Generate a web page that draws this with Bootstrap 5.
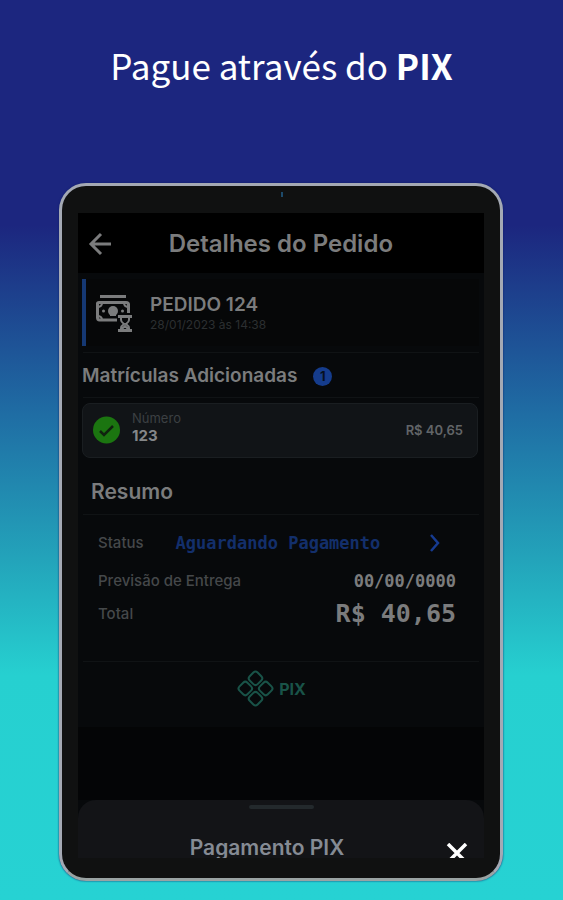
<!DOCTYPE html>
<html lang="pt-BR">
<head>
<meta charset="utf-8">
<meta name="viewport" content="width=device-width, initial-scale=1">
<title>Detalhes do Pedido</title>
<link href="https://cdn.jsdelivr.net/npm/bootstrap@5.3.0/dist/css/bootstrap.min.css" rel="stylesheet">
<style>
body{min-height:100vh;background:linear-gradient(180deg,#1c267f 0%,#1c267f 25%,#1f6da4 46%,#23a3ba 62%,#26d0d0 75%,#26d2d3 100%);font-family:Inter,"Noto Sans",sans-serif;line-height:20px;color:#7b7c7d}
.promo{font-family:"Noto Sans CJK SC","Noto Sans",sans-serif;font-size:35px;line-height:48px;font-weight:400;padding:41px 0 94px}
.tablet{margin:0 60px 19px 59px;border:3px solid #a4a9b4;border-bottom-color:#9aa3a3;border-radius:27px;background:#101111;padding:27px 16px 20px;box-shadow:0 0 2px #0e1d67;position:relative}
.lens{position:absolute;top:6px;left:50%;width:2px;height:5px;background:#1d4a6a}
.screen{background:#07090b;overflow:hidden}
.app-top{background:#000;height:60px;padding:2px 91px 0 10px}
.app-top h1{font-size:24px;line-height:30px;font-weight:600}
.icon-btn{border:0;background:none;padding:0;line-height:0;color:inherit}
.order{margin:6px 5px 6px 4px;height:67px;border-left:4px solid #153873;background:#060708;padding-left:9px;gap:18px}
.order h2{font-size:19px;line-height:24px;font-weight:600}
.order time{font-size:12px;line-height:16px;color:#2c2f31}
.rule{border-top:1px solid #101315;margin:0 5px}
.sec-title{font-size:19px;line-height:24px;font-weight:600}
.added{padding:11px 4px 9px;gap:16px}
.count{width:19px;height:19px;line-height:19px;border-radius:50%;background:#153c8c;color:#07101f;font-size:13px;font-weight:700;text-align:center}
.entry{margin:5px 6px 0 4px;padding:6px 14px 12px 10px;border:1px solid #1a1e21;border-radius:8px;background:#111417;gap:12px}
.tiny{font-size:13px;line-height:17px;color:#3c4043}
.entry strong{font-size:15px;line-height:18px;font-weight:700;color:#858789}
.entry .price{font-size:13px;font-weight:600;color:#626568}
.resumo{font-size:21px;line-height:24px;font-weight:600;padding:22px 13px 10px}
.facts{padding:14px 28px 0 20px;font-size:15px;color:#45484a}
.facts dt{font-weight:500}
.mono{font-family:"DejaVu Sans Mono","Liberation Mono",monospace;font-weight:700;color:#7b7c7d}
.status-link{color:#132f6b;font-size:17px}
.eta{padding:10px 0 8px}
.date{font-size:17px}
.total{font-size:25px;line-height:30px}
.pix{color:#195348;font-size:16px;font-weight:700;padding:8px 19px 20px 0;gap:5px}
.under{background:#040506;height:73px}
.sheet{background:#131417;border-radius:18px 18px 0 0;height:58px;overflow:hidden;color:#858b94}
.grab{width:65px;height:4px;border-radius:2px;background:#23292c;margin:5px auto 0}
.sheet h2{font-size:21px;line-height:24px;font-weight:600;padding-left:58px}
.sheet-head{padding:27px 16px 0 0}
.close-pix{color:#fff;margin-top:7px}
</style>
</head>
<body>
<header class="promo text-center text-white">Pague através do <b>PIX</b></header>
<main class="tablet">
<span class="lens"></span>
<div class="screen">
  <div class="app-top d-flex align-items-center justify-content-between">
    <button class="icon-btn" type="button" aria-label="Voltar"><svg width="24" height="24" viewBox="0 0 24 24" fill="none" stroke="currentColor" stroke-width="3"><path d="M23 12H3M13 2 3 12l10 10"/></svg></button>
    <h1 class="m-0 text-nowrap">Detalhes do Pedido</h1>
  </div>
  <section class="order d-flex align-items-center">
    <svg width="37" height="38" viewBox="0 0 37 38" fill="none" stroke="currentColor" stroke-width="3"><path d="M5 2.500H31"/><path d="M22 26H4.500Q2.500 26 2.500 23.500V9.500Q2.500 8.500 4 8.500H31Q33.500 8.500 33.500 10.500V19"/><path d="M7 9Q7 13 2 13M29 9Q29 13 34 13M2 22Q7 22 7 26" stroke-width="2"/><circle cx="18" cy="17" r="5" fill="currentColor" stroke="none"/><path d="M15 17h6v5h-6z" fill="currentColor" stroke="none"/><circle cx="8.500" cy="17" r="1.500" fill="currentColor" stroke="none"/><circle cx="27.500" cy="17" r="1.500" fill="currentColor" stroke="none"/><path d="M23 22.500H37M23 36.500H37" stroke-width="3"/><path d="M26 24v2q0 2 3 4-3 2-3 4v2M34 24v2q0 2-3 4 3 2 3 4v2M27 35l3-3 3 3" stroke-width="2"/></svg>
    <div><h2 class="m-0">PEDIDO 124</h2><time class="d-block" datetime="2023-01-28T14:38">28/01/2023 às 14:38</time></div>
  </section>
  <div class="rule"></div>
  <div class="added d-flex align-items-center"><h2 class="sec-title m-0">Matrículas Adicionadas</h2><span class="count">1</span></div>
  <div class="rule"></div>
  <section class="entry d-flex align-items-center">
    <svg class="mt-1" width="27" height="28" viewBox="0 0 27 28"><circle cx="13.500" cy="14" r="13.500" fill="#1b7510"/><path d="m7 15 4 4 9-9" fill="none" stroke="#10230f" stroke-width="2.500"/></svg>
    <div class="flex-grow-1"><div class="tiny">Número</div><strong class="d-block">123</strong></div>
    <span class="price mt-1">R$ 40,65</span>
  </section>
  <h2 class="resumo m-0">Resumo</h2>
  <div class="rule"></div>
  <dl class="facts m-0">
    <div class="d-flex align-items-center pt-1 pb-2"><dt>Status</dt><dd class="m-0 flex-grow-1 ms-4"><a href="#status" class="status-link mono text-decoration-none d-flex align-items-center justify-content-between ps-2 pe-3 text-nowrap">Aguardando Pagamento<svg width="10" height="18" viewBox="0 0 10 18" fill="none" stroke="#163b91" stroke-width="2.500"><path d="m1 1 7 8-7 8"/></svg></a></dd></div>
    <div class="eta d-flex align-items-center justify-content-between"><dt>Previsão de Entrega</dt><dd class="m-0 mono date">00/00/0000</dd></div>
    <div class="d-flex align-items-center justify-content-between pb-4 mb-2"><dt>Total</dt><dd class="m-0 mono total">R$ 40,65</dd></div>
  </dl>
  <div class="rule"></div>
  <div class="pix d-flex align-items-center justify-content-center">
    <svg width="37" height="37" viewBox="-18.500 -18.500 37 37" fill="none" stroke="currentColor" stroke-width="2"><g transform="rotate(45)"><rect x="-12.800" y="-12.800" width="11.200" height="11.200" rx="3"/><rect x="1.600" y="-12.800" width="11.200" height="11.200" rx="3"/><rect x="-12.800" y="1.600" width="11.200" height="11.200" rx="3"/><rect x="1.600" y="1.600" width="11.200" height="11.200" rx="3"/></g></svg>
    <span>PIX</span>
  </div>
  <div class="under"></div>
  <section class="sheet">
    <div class="grab"></div>
    <div class="sheet-head d-flex align-items-start justify-content-end gap-5"><h2 class="m-0 flex-grow-1 text-center text-nowrap">Pagamento PIX</h2><button class="icon-btn close-pix" type="button" aria-label="Fechar"><svg width="22" height="20" viewBox="0 0 22 20" fill="none" stroke="currentColor" stroke-width="3.500"><path d="m2 1 18 18M20 1 2 19"/></svg></button></div>
  </section>
</div>
</main>
<script src="https://cdn.jsdelivr.net/npm/bootstrap@5.3.0/dist/js/bootstrap.bundle.min.js"></script>
</body>
</html>
